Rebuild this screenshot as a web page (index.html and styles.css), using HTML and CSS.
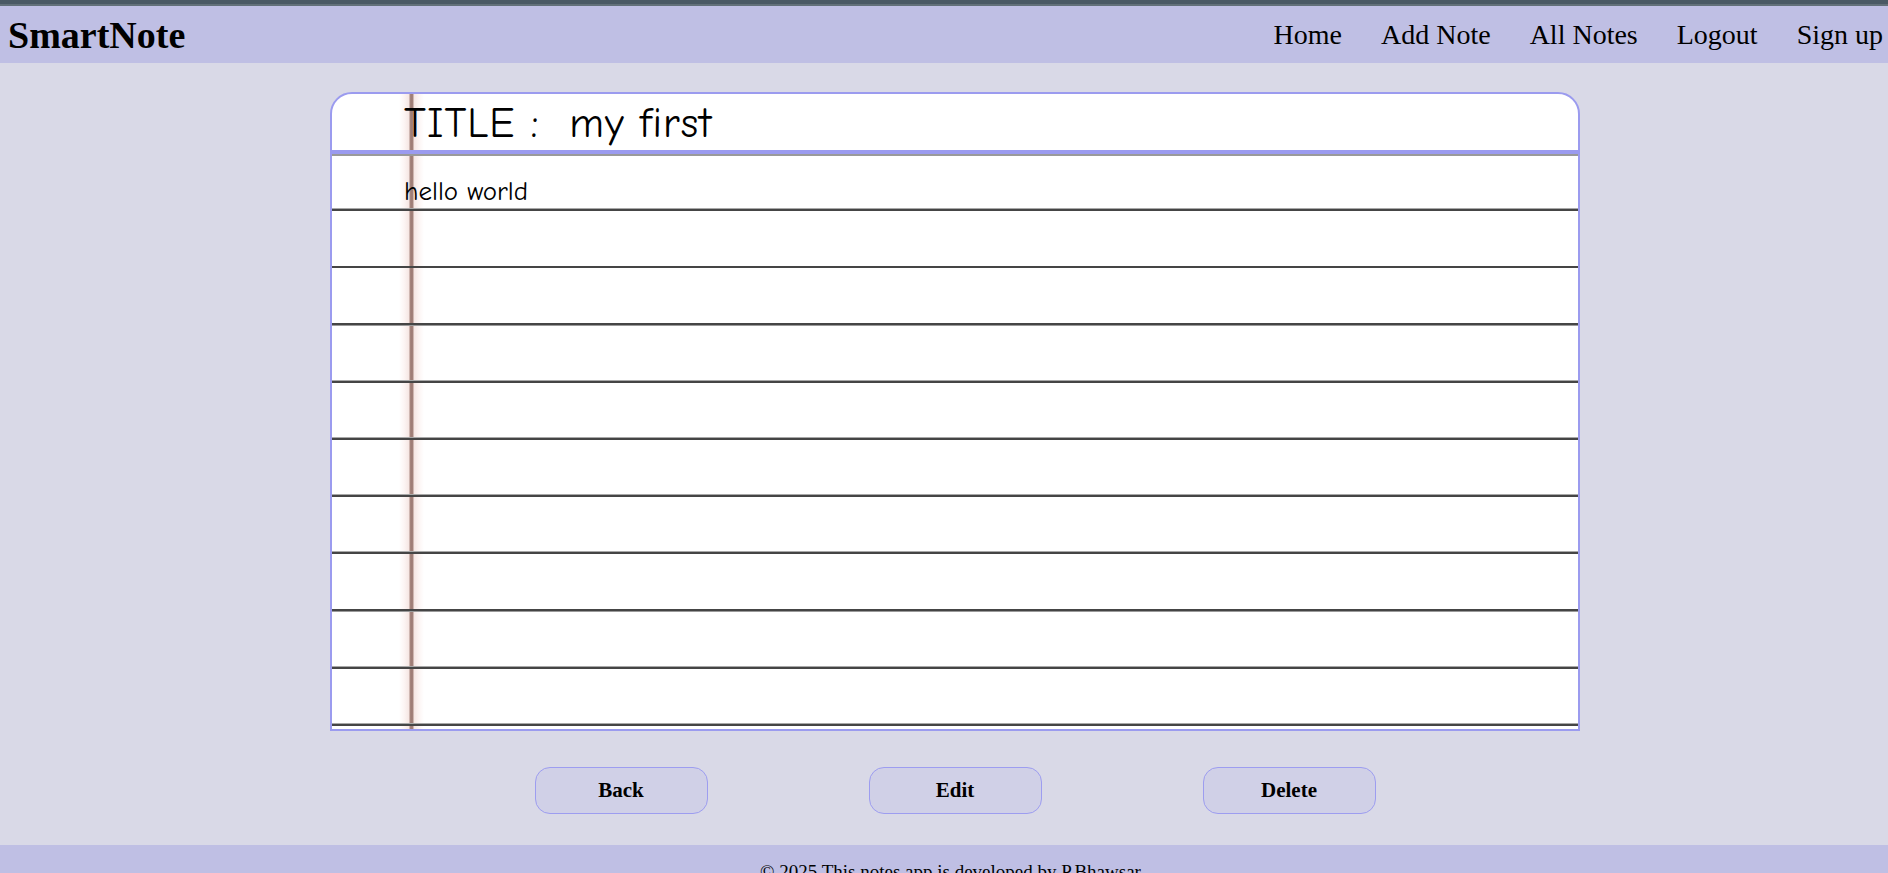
FILE: index.html
```html
<!DOCTYPE html>
<html lang="en">
<head>
<meta charset="utf-8">
<title>SmartNote</title>
<link rel="stylesheet" href="styles.css">
</head>
<body>
<div class="topstrip"></div>
<header class="navbar">
  <div class="brand">SmartNote</div>
  <nav class="links">
    <a href="#">Home</a>
    <a href="#">Add Note</a>
    <a href="#">All Notes</a>
    <a href="#">Logout</a>
    <a href="#">Sign up</a>
  </nav>
</header>
<main class="main">
  <section class="note">
    <div class="note-title">TITLE :&nbsp;&nbsp;my first</div>
    <div class="note-body">hello world</div>
  </section>
  <div class="actions">
    <button class="btn">Back</button>
    <button class="btn">Edit</button>
    <button class="btn">Delete</button>
  </div>
</main>
<footer class="footer">© 2025 This notes app is developed by P.Bhawsar</footer>
</body>
</html>
```
FILE: styles.css
```css
html, body {
  margin: 0;
  padding: 0;
}
body {
  background: #d9d9e7;
  font-family: "Liberation Serif", "Times New Roman", serif;
  color: #000;
}
.topstrip {
  height: 6px;
  background: linear-gradient(#4a5964 0 4px, #627079 4px 6px);
}
.navbar {
  height: 57px;
  background: #bfbfe4;
  display: flex;
  align-items: center;
  justify-content: space-between;
  padding: 0 5px 0 8px;
}
.brand {
  font-size: 38px;
  font-weight: bold;
}
.links {
  display: flex;
  gap: 39px;
}
.links a {
  font-size: 28px;
  color: #000;
  text-decoration: none;
}
.main {
  padding-left: 22px;
}
.note {
  width: 1246px;
  margin: 29px auto 0;
  border: 2px solid #9b9bef;
  border-radius: 22px 22px 0 0;
  overflow: hidden;
  background:
    linear-gradient(90deg, rgba(255,255,255,0) 0, rgba(255,255,255,0) 67px, rgba(250,235,233,0.5) 72px, rgba(242,220,216,0.7) 77px, #a8877f 78px, #9c7a74 80px, #a8877f 81px, rgba(242,220,216,0.7) 82px, rgba(250,235,233,0.5) 87px, rgba(255,255,255,0) 92px),
    #ffffff;
  font-family: "Comic Sans MS", "Comic Neue", "Open Sans", sans-serif;
}
.note-title {
  height: 60px;
  box-sizing: border-box;
  padding: 3px 0 0 72px;
  font-size: 42px;
  line-height: 53px;
  letter-spacing: 1px;
  border-bottom: 4px solid #9b9bef;
  white-space: nowrap;
}
.note-body {
  height: 575px;
  box-sizing: border-box;
  padding: 9px 0 0 72px;
  font-size: 27px;
  line-height: 57.2px;
  background:
    linear-gradient(#9a9a9a, #9a9a9a) top left / 100% 2px no-repeat,
    repeating-linear-gradient(180deg,
      rgba(0,0,0,0) 0px,
      rgba(0,0,0,0) 54.3px,
      #a8a8a8 54.3px,
      #a8a8a8 55px,
      #454545 55px,
      #454545 57px,
      #9a9a9a 57px,
      #9a9a9a 57.2px);
}
.actions {
  display: flex;
  justify-content: center;
  gap: 161px;
  margin-top: 36px;
}
.btn {
  width: 173px;
  height: 47px;
  box-sizing: border-box;
  background: #d0d0e7;
  border: 1px solid #9d9df0;
  border-radius: 15px;
  font-family: "Liberation Serif", "Times New Roman", serif;
  font-size: 21px;
  font-weight: bold;
  color: #000;
  padding: 0;
}
.footer {
  margin-top: 31px;
  background: #bfbfe4;
  padding: 16px 0 16px 13px;
  text-align: center;
  font-size: 19px;
}
```
